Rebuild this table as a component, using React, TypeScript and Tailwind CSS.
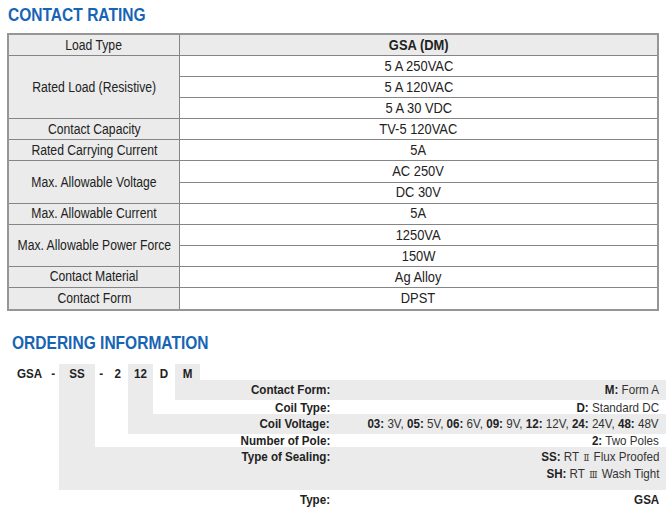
import React from "react";

type Cell = React.ReactNode;

const COLS =
  "grid grid-cols-[12px_35px_12px_36px_12px_21px_25px_22px_25px_130px_minmax(0,1fr)]";

const SC = ({ children, o = "c" }: { children: React.ReactNode; o?: "c" | "r" | "l" }) => (
  <span
    className={`inline-block shrink-0 whitespace-nowrap scale-x-[0.86] ${
      o === "r" ? "origin-right" : o === "l" ? "origin-left" : "origin-center"
    }`}
  >
    {children}
  </span>
);

function OrderRow({
  h,
  grey,
  codes,
  label,
  value,
  top,
}: {
  h: string;
  grey: number[];
  codes?: Cell[];
  label?: Cell;
  value?: Cell;
  top?: boolean;
}) {
  const cells: React.ReactNode[] = [];
  for (let i = 0; i < 11; i++) {
    const g = grey.includes(i) ? "bg-[#ebebeb]" : "";
    let content: React.ReactNode = null;
    let cls = "";
    if (codes && i >= 1 && i <= 8) {
      content = <SC>{codes[i - 1]}</SC>;
      cls = "flex items-center justify-center font-bold text-[#222]";
    } else if (i === 9) {
      content = label ? <SC o="r">{label}</SC> : null;
      cls = top
        ? "flex flex-col items-end pt-[2px] font-bold text-[#222] leading-[16px]"
        : "flex items-center justify-end font-bold text-[#222]";
    } else if (i === 10) {
      content = value;
      cls = top
        ? "min-w-0 flex flex-col items-end pt-[2px] pr-[7px] text-[#333] leading-[16px]"
        : "min-w-0 flex items-center justify-end pr-[7px] text-[#333]";
    }
    cells.push(
      <div key={i} className={`${g} ${cls}`}>
        {content}
      </div>
    );
  }
  return <div className={`${COLS} ${h}`}>{cells}</div>;
}

const B = ({ children }: { children: React.ReactNode }) => (
  <span className="font-bold text-[#222]">{children}</span>
);

const Roman = ({ children }: { children: React.ReactNode }) => (
  <span className="font-['DejaVu_Serif',serif] text-[10px] mx-[5px]">{children}</span>
);

export default function App() {
  const labelCls =
    "bg-[#ebebeb] border-r border-b border-[#858585] flex items-center justify-center text-[14px] text-[#222]";
  const valCls =
    "border-b border-[#858585] flex items-center justify-center text-[15px] text-[#222]";
  const L = ({ children }: { children: React.ReactNode }) => (
    <span className="inline-block whitespace-nowrap scale-x-[0.87] origin-center">{children}</span>
  );
  const V = ({ children }: { children: React.ReactNode }) => (
    <span className="inline-block whitespace-nowrap scale-x-[0.86] origin-center">{children}</span>
  );
  return (
    <div className="w-[666px] h-[518px] bg-white font-['Liberation_Sans',Arial,sans-serif] overflow-hidden">
      <div className="pt-[4px] pl-[8px] h-[25px] text-[18.5px] leading-[21px] font-bold text-[#1764b5]">
        <span className="inline-block whitespace-nowrap scale-x-[0.84] origin-left">CONTACT RATING</span>
      </div>
      <div className="mt-[8px] ml-[7px] w-[652px] border-2 border-[#969696]">
        <div className="grid grid-cols-[171px_1fr] grid-rows-[21px_repeat(12,21.1px)]">
          <div className={labelCls}><L>Load Type</L></div>
          <div className={`${valCls} bg-[#ebebeb] font-bold`}><V>GSA (DM)</V></div>

          <div className={`${labelCls} row-span-3`}><L>Rated Load (Resistive)</L></div>
          <div className={valCls}><V>5 A 250VAC</V></div>
          <div className={valCls}><V>5 A 120VAC</V></div>
          <div className={valCls}><V>5 A 30 VDC</V></div>

          <div className={labelCls}><L>Contact Capacity</L></div>
          <div className={valCls}><V>TV-5 120VAC</V></div>

          <div className={labelCls}><L>Rated Carrying Current</L></div>
          <div className={valCls}><V>5A</V></div>

          <div className={`${labelCls} row-span-2`}><L>Max. Allowable Voltage</L></div>
          <div className={valCls}><V>AC 250V</V></div>
          <div className={valCls}><V>DC 30V</V></div>

          <div className={labelCls}><L>Max. Allowable Current</L></div>
          <div className={valCls}><V>5A</V></div>

          <div className={`${labelCls} row-span-2`}><L>Max. Allowable Power Force</L></div>
          <div className={valCls}><V>1250VA</V></div>
          <div className={valCls}><V>150W</V></div>

          <div className={labelCls}><L>Contact Material</L></div>
          <div className={valCls}><V>Ag Alloy</V></div>

          <div className={`${labelCls} border-b-0`}><L>Contact Form</L></div>
          <div className={`${valCls} border-b-0`}><V>DPST</V></div>
        </div>
      </div>

      <div className="mt-[21px] pl-[12px] h-[21px] text-[18.5px] leading-[21px] font-bold text-[#1764b5]">
        <span className="inline-block whitespace-nowrap scale-x-[0.84] origin-left">ORDERING INFORMATION</span>
      </div>

      <div className="mt-[11px] text-[13.5px]">
        <OrderRow
          h="h-[16px]"
          grey={[3, 6, 8]}
          codes={["GSA", "-", "SS", "-", "2", "12", "D", "M"]}
        />
        <OrderRow
          h="h-[18px]"
          grey={[3, 6, 8, 9, 10]}
          label="Contact Form:"
          value={
            <SC o="r">
              <B>M:</B> Form A
            </SC>
          }
        />
        <OrderRow
          h="h-[16px]"
          grey={[3, 6]}
          label="Coil Type:"
          value={
            <SC o="r">
              <B>D:</B> Standard DC
            </SC>
          }
        />
        <OrderRow
          h="h-[17px]"
          grey={[3, 6, 7, 8, 9, 10]}
          label="Coil Voltage:"
          value={
            <SC o="r">
              <B>03:</B> 3V, <B>05:</B> 5V, <B>06:</B> 6V, <B>09:</B> 9V, <B>12:</B> 12V,{" "}
              <B>24:</B> 24V, <B>48:</B> 48V
            </SC>
          }
        />
        <OrderRow
          h="h-[16px]"
          grey={[3]}
          label="Number of Pole:"
          value={
            <SC o="r">
              <B>2:</B> Two Poles
            </SC>
          }
        />
        <OrderRow
          h="h-[43px]"
          grey={[3, 4, 5, 6, 7, 8, 9, 10]}
          top
          label="Type of Sealing:"
          value={
            <>
              <SC o="r">
                <B>SS:</B> RT<Roman>Ⅱ</Roman>Flux Proofed
              </SC>
              <SC o="r">
                <B>SH:</B> RT<Roman>Ⅲ</Roman>Wash Tight
              </SC>
            </>
          }
        />
        <OrderRow
          h="h-[20px]"
          grey={[]}
          label="Type:"
          value={
            <SC o="r">
              <B>GSA</B>
            </SC>
          }
        />
      </div>
    </div>
  );
}
